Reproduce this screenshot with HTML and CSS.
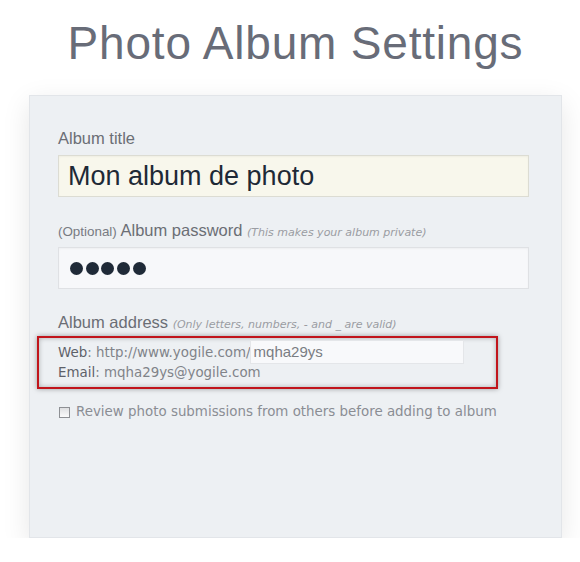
FILE: index.html
```html
<!DOCTYPE html>
<html>
<head>
<meta charset="utf-8">
<link rel="stylesheet" href="styles.css">
</head>
<body>
<div class="page">
  <h1 class="title">Photo Album Settings</h1>
  <div class="panel">
    <div class="field">
      <div class="label">Album title</div>
      <div class="input input-title">Mon album de photo</div>
    </div>
    <div class="field">
      <div class="label"><span class="opt">(Optional)</span> Album password <span class="note">(This makes your album private)</span></div>
      <div class="input input-pass">
        <span class="dot"></span><span class="dot"></span><span class="dot"></span><span class="dot"></span><span class="dot"></span>
      </div>
    </div>
    <div class="field field-last">
      <div class="label">Album address <span class="note">(Only letters, numbers, - and _ are valid)</span></div>
      <div class="address-box">
        <div class="web-row">
          <span class="key">Web</span><span class="val">: http://www.yogile.com/</span>
          <span class="slug">mqha29ys</span>
        </div>
        <div class="email-row"><span class="key">Email</span><span class="val">: mqha29ys@yogile.com</span></div>
      </div>
    </div>
    <div class="check-row">
      <span class="checkbox"></span>
      <span class="check-text">Review photo submissions from others before adding to album</span>
    </div>
  </div>
</div>
</body>
</html>
```
FILE: styles.css
```css
html, body {
  margin: 0;
  padding: 0;
  background: #ffffff;
}
.page {
  width: 533px;
  margin-left: 29px;
  padding-top: 17px;
}
.title {
  margin: 0;
  font-family: "Liberation Sans", Arial, sans-serif;
  font-weight: normal;
  font-size: 46px;
  line-height: 52px;
  letter-spacing: 0.8px;
  color: #686c78;
  text-align: center;
}
.panel {
  margin-top: 26px;
  box-sizing: border-box;
  height: 443px;
  background: #edf0f3;
  border: 1px solid #e2e5e9;
  box-shadow: 0 8px 26px rgba(0, 0, 0, 0.10);
  padding: 32px 32px 0 28px;
}
.field {
  margin-bottom: 23px;
}
.field-last {
  margin-bottom: 0;
}
.label {
  font-family: "Liberation Sans", Arial, sans-serif;
  font-size: 16.5px;
  line-height: 20px;
  height: 20px;
  color: #6b6e75;
  white-space: nowrap;
}
.opt {
  font-size: 13.4px;
  color: #787b82;
}
.note {
  font-family: "DejaVu Sans", Verdana, sans-serif;
  font-style: italic;
  font-size: 11px;
  color: #9a9ca2;
}
.input {
  margin-top: 7px;
  box-sizing: border-box;
  height: 42px;
  width: 471px;
  border: 1px solid #dcdcd3;
  box-shadow: inset 0 1px 2px rgba(0, 0, 0, 0.04);
}
.input-title {
  background: #f8f7ec;
  font-family: "Liberation Sans", Arial, sans-serif;
  font-size: 27px;
  line-height: 41px;
  color: #1e2936;
  padding-left: 9px;
}
.input-pass {
  background: #f7f8fa;
  border-color: #dfe1e4;
  display: flex;
  align-items: center;
  gap: 2.7px;
  padding-left: 11px;
}
.dot {
  width: 13px;
  height: 13px;
  border-radius: 50%;
  background: #1f2a37;
}
.address-box {
  margin-top: 4px;
  margin-left: -21px;
  width: 461px;
  box-sizing: border-box;
  border: 2px solid #c1151c;
  padding: 2px 0 5px 19px;
  box-shadow: 0 0 5px rgba(0, 0, 0, 0.35), inset 0 0 5px rgba(0, 0, 0, 0.28);
  font-family: "DejaVu Sans", Verdana, sans-serif;
  font-size: 13.4px;
}
.web-row {
  display: flex;
  align-items: baseline;
  height: 24px;
  white-space: nowrap;
}
.key {
  color: #5d6169;
}
.val {
  color: #808389;
}
.slug {
  margin-left: -1px;
  box-sizing: border-box;
  width: 214px;
  height: 24px;
  background: #f8f9fb;
  border: 1px solid #e4e6e9;
  font-family: "Liberation Sans", Arial, sans-serif;
  font-size: 15px;
  line-height: 22px;
  color: #7a7d83;
  padding-left: 3px;
}
.email-row {
  line-height: 18px;
  height: 18px;
  white-space: nowrap;
}
.check-row {
  margin-top: 14px;
  display: flex;
  align-items: center;
  height: 18px;
  margin-left: 1px;
}
.checkbox {
  box-sizing: border-box;
  width: 11px;
  height: 11px;
  border: 1px solid #8e9094;
  background: linear-gradient(#dfe0e2, #fbfbfb);
  margin-right: 6px;
}
.check-text {
  font-family: "DejaVu Sans", Verdana, sans-serif;
  font-size: 13.4px;
  line-height: 18px;
  color: #8a8d93;
  white-space: nowrap;
}
```
